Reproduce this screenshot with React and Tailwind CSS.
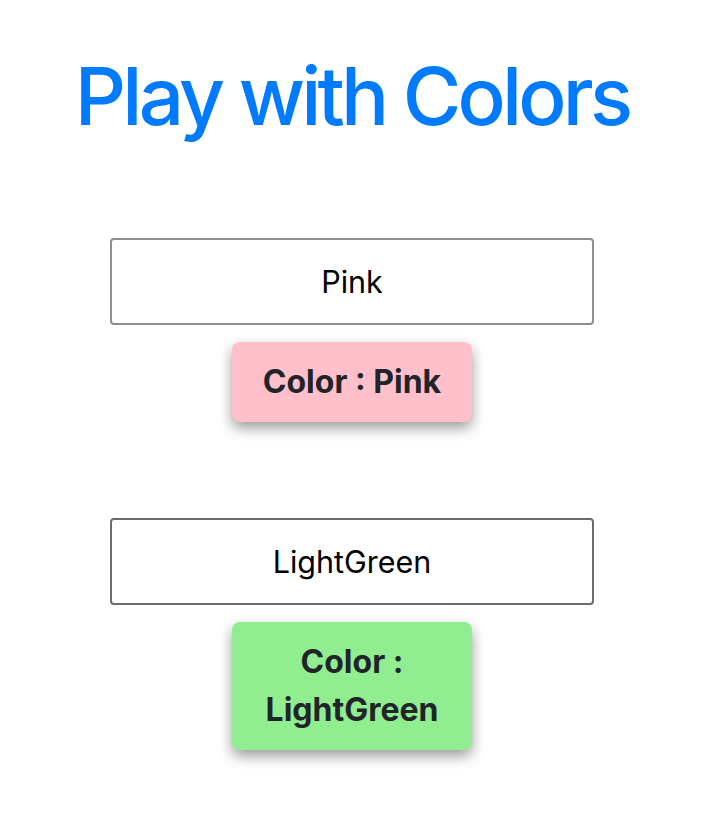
import React from "react";

function Block({ value, bg, border }) {
  return (
    <div className="flex flex-col items-center">
      <input
        readOnly
        value={value}
        className={`w-[484px] h-[87px] rounded-[4px] border-2 ${border} bg-white text-center text-[30.5px] text-black outline-none`}
        style={{ fontFamily: "Inter, sans-serif" }}
      />
      <div
        className={`mt-[17px] w-[240px] rounded-[8px] px-4 py-4 text-center text-[32px] font-bold leading-[48px] text-[#212529] shadow-[0_6px_14px_rgba(0,0,0,0.4)] ${bg}`}
      >
        Color : {value}
      </div>
    </div>
  );
}

export default function App() {
  return (
    <div
      className="w-[704px] min-h-[836px] bg-white flex flex-col items-center"
      style={{ fontFamily: "Inter, sans-serif" }}
    >
      <h1 className="pt-[48px] text-[80px] leading-[96px] font-[550] tracking-[-0.048em] text-[#007bff]">
        Play with Colors
      </h1>
      <div className="mt-[94px] flex flex-col items-center gap-[96px]">
        <Block value="Pink" bg="bg-[#ffc0cb]" border="border-[#8e8d97]" />
        <Block value="LightGreen" bg="bg-[#90ee90]" border="border-[#6b6a74]" />
      </div>
    </div>
  );
}
